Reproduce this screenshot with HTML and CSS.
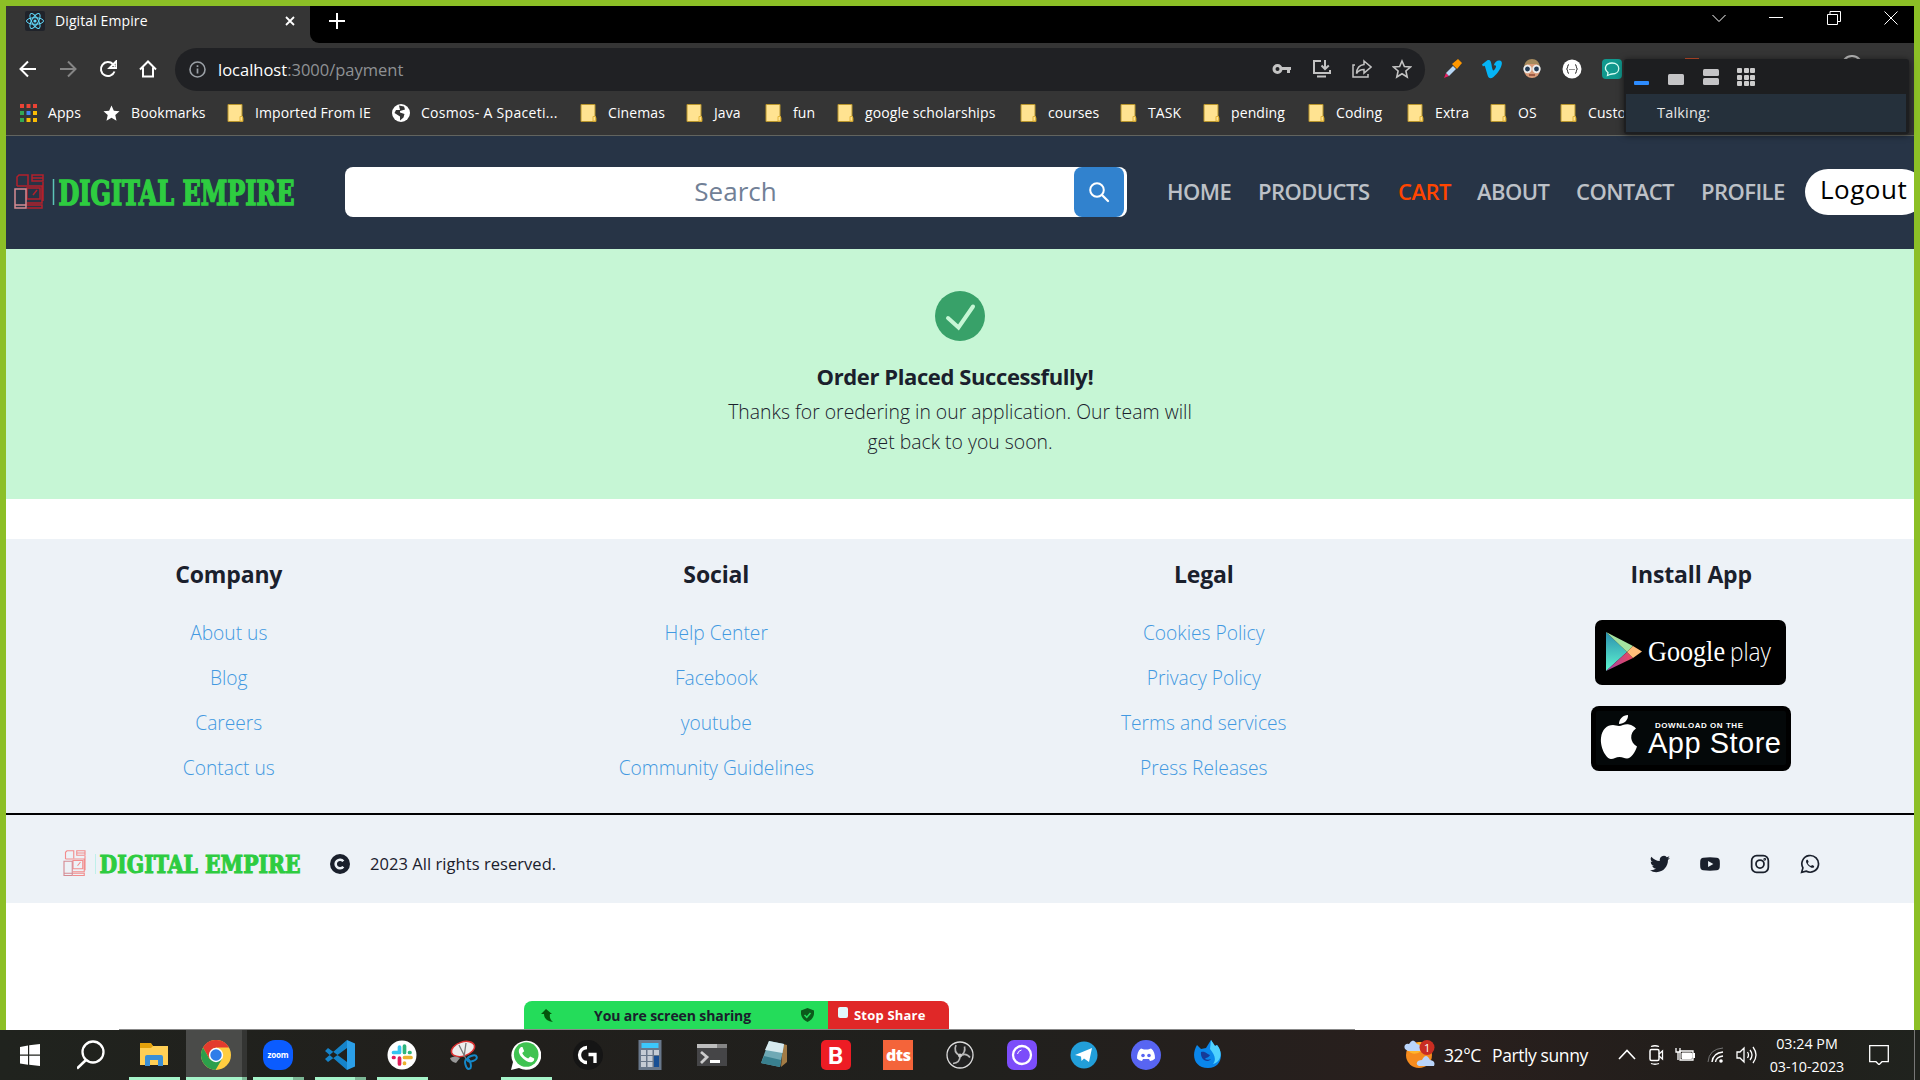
FILE: index.html
```html
<!DOCTYPE html>
<html lang="en">
<head>
<meta charset="utf-8">
<title>Digital Empire</title>
<link rel="stylesheet" href="styles.css">
</head>
<body>
<svg class="defs" width="0" height="0">
  <symbol id="folder" viewBox="0 0 16 18"><path d="M.5.5h14v13h1v4h-15z" fill="#ffe391" stroke="#b8952c"/><path d="M12.5 17v-4.5h2.5V17z" fill="#ffe391" stroke="#e3b53a"/></symbol>
  <symbol id="devices" viewBox="0 0 30 36"><g fill="none" stroke="currentColor" stroke-width="1.5"><path d="M3 12V3l2-2h9v10M18 1h11v6H18zM18 4h11M3 12h25v17H13M13 14h13v11H13zM12 31h16v3H13M29 8v19M19 21l4-5"/><path class="phone" d="M1 15h11v19H1zM1 31h11"/></g></symbol>
</svg>
<div class="screen">
  <div class="tabstrip">
    <div class="tab">
      <svg class="react" viewBox="0 0 20 20"><rect width="20" height="20" rx="2" fill="#20232a"/><g fill="none" stroke="#61dafb" stroke-width="1"><ellipse cx="10" cy="10" rx="8.5" ry="3.3"/><ellipse cx="10" cy="10" rx="8.5" ry="3.3" transform="rotate(60 10 10)"/><ellipse cx="10" cy="10" rx="8.5" ry="3.3" transform="rotate(120 10 10)"/></g><circle cx="10" cy="10" r="1.6" fill="#61dafb"/></svg>
      <span class="tab-title">Digital Empire</span>
      <svg class="tab-close" viewBox="0 0 10 10"><path d="M1 1l8 8M9 1L1 9" stroke="#fff" stroke-width="1.8"/></svg>
    </div>
    <svg class="tab-plus" viewBox="0 0 16 16"><path d="M8 0v16M0 8h16" stroke="#fff" stroke-width="2"/></svg>
    <div class="window-buttons">
      <svg width="14" height="14" viewBox="0 0 14 14"><path d="M.5 4l6.500 6.500L13.500 4"/></svg>
      <svg width="14" height="14" viewBox="0 0 14 14"><path d="M0 6.500h14"/></svg>
      <svg width="14" height="14" viewBox="0 0 14 14"><path d="M.5 3.500h10v10H.5zM3 3.500V.5h10.500v10h-3"/></svg>
      <svg width="14" height="14" viewBox="0 0 14 14"><path d="M.5.5l13 13M13.500.5l-13 13"/></svg>
    </div>
  </div>
  <div class="toolbar">
    <div class="nav-buttons">
      <svg width="18" height="18" viewBox="0 0 18 18"><path d="M17 9H2M9 1.500L1.500 9 9 16.500"/></svg>
      <svg class="dim" width="18" height="18" viewBox="0 0 18 18"><path d="M1 9h15M9 1.500L16.500 9 9 16.500"/></svg>
      <svg width="18" height="18" viewBox="0 0 18 18"><path d="M15.500 11.500A7 7 0 1 1 14 4.200l2 2.300"/><path d="M17.500 1v7h-7z" fill="#fff" stroke="none"/></svg>
      <svg width="18" height="18" viewBox="0 0 18 18"><path d="M1 9.500L9 1.500l8 8M4 7.500V16.500h10V7.500"/></svg>
    </div>
    <div class="omnibox">
      <svg width="17" height="17" viewBox="0 0 17 17"><circle cx="8.500" cy="8.500" r="7.500" fill="none" stroke="#9aa0a6" stroke-width="1.600"/><path d="M8.500 7.500v5M8.500 4.200v1.700" stroke="#9aa0a6" stroke-width="1.700"/></svg>
      <span class="url">localhost<span>:3000/payment</span></span>
      <div class="omni-actions">
        <svg width="20" height="20" viewBox="0 0 20 20"><circle cx="5.500" cy="10" r="3.500" stroke-width="3"/><path d="M9 9.500h10M16.500 9.500v4.500" stroke-width="3"/></svg>
        <svg width="20" height="20" viewBox="0 0 20 20"><path d="M9 2H2v12h16v-3M13 1v9M9.500 6.500L13 10l3.800-3.500M5 17.500h9" stroke-width="2"/></svg>
        <svg width="20" height="20" viewBox="0 0 20 20"><path d="M3 6H1v12h15v-3M12 2l7 6-7 6v-3.500c-4 0-6 1.500-7.500 4 .3-5 3-8.500 7.500-9z" stroke-width="1.500"/></svg>
        <svg width="20" height="20" viewBox="0 0 20 20"><path d="M10 2l2.400 5.500 6 .5-4.500 4 1.300 6L10 14.800 4.800 18l1.300-6-4.500-4 6-.5z" stroke-width="1.600"/></svg>
      </div>
    </div>
    <div class="extensions">
      <svg width="20" height="20" viewBox="0 0 20 20"><path d="M2 19l2-5 3 3z" fill="#e91e63"/><path d="M4 14l7-7 3 3-7 7z" fill="#b7d7f5"/><path d="M10 5l6-5 4 4-5 6z" fill="#ff9800"/></svg>
      <svg width="20" height="20" viewBox="0 0 20 20"><path d="M0 5.500L5 1.500c3-1.500 4 1 4.500 4 .6 4 1.200 6 2 6s3-3.500 2.500-4.500-1.500-.8-2.300-.4C13 2.200 15.500 1 18 1.500c5 1.500-1 12-6.500 16.500-3 2.200-5 1.300-6-2L3 7.500c-.5-1-1-.8-2 0z" fill="#05b4f5"/></svg>
      <svg width="20" height="20" viewBox="0 0 20 20"><circle cx="10" cy="11" r="8" fill="#d99b78"/><path d="M2 9c0-12 16-12 16 0l-3-4H5z" fill="#a58a5d"/><g fill="#243b55" stroke="#eee" stroke-width="1.800"><circle cx="5.500" cy="10" r="3.300"/><circle cx="14.500" cy="10" r="3.300"/></g><path d="M7 16h6" stroke="#8d4a37" stroke-width="1.500"/></svg>
      <svg width="20" height="20" viewBox="0 0 20 20"><circle cx="10" cy="10" r="9.500" fill="#fff"/><path d="M7 5.500c-1.700 0-1 3.500-2.300 4.500C6 11 5.300 14.500 7 14.500M13 5.500c1.700 0 1 3.500 2.300 4.500-1.300 1-.6 4.500-2.300 4.500" fill="none" stroke="#222"/><path d="M7.500 10.500h1M9.500 10.500h1M11.500 10.500h1" stroke="#222"/></svg>
      <svg width="20" height="20" viewBox="0 0 20 20"><rect width="20" height="20" rx="4" fill="#11998e"/><path d="M10 4c9 0 9 11 0 11-1.500 0-2 .5-4.500 1.500l.5-3C1 9.500 4 4 10 4z" fill="none" stroke="#d8fff5" stroke-width="1.300"/></svg>
      <i class="ext-peek"></i><i class="avatar-peek"></i>
    </div>
  </div>
  <div class="bookmarks">
    <div class="bm"><svg viewBox="0 0 17 18"><path d="M0 0h4v4H0zM6.500 0h4v4h-4zM13 0h4v4h-4z" fill="#ea4335"/><path d="M0 7h4v4H0zM0 14h4v4H0z" fill="#34a853"/><path d="M6.500 7h4v4h-4z" fill="#4285f4"/><path d="M13 7h4v4h-4zM6.500 14h4v4h-4zM13 14h4v4h-4z" fill="#fbbc05"/></svg>Apps</div>
    <div class="bm"><svg viewBox="0 0 18 18"><path d="M9 1l2.500 5.600 6 .6-4.500 4 1.300 6L9 14l-5.300 3.200 1.300-6-4.500-4 6-.6z" fill="#fff"/></svg>Bookmarks</div>
    <div class="bm"><svg><use href="#folder"/></svg>Imported From IE</div>
    <div class="bm"><svg viewBox="0 0 18 18"><circle cx="9" cy="9" r="9" fill="#fff"/><path d="M7 1.500l5 1 1 3-5 1.500v1.500l4.500 1.500-1 3.500-3.500 3v-4L2.500 9 4 6h4z" fill="#353535"/></svg>Cosmos- A Spaceti...</div>
    <div class="bm"><svg><use href="#folder"/></svg>Cinemas</div>
    <div class="bm"><svg><use href="#folder"/></svg>Java</div>
    <div class="bm"><svg><use href="#folder"/></svg>fun</div>
    <div class="bm"><svg><use href="#folder"/></svg>google scholarships</div>
    <div class="bm"><svg><use href="#folder"/></svg>courses</div>
    <div class="bm"><svg><use href="#folder"/></svg>TASK</div>
    <div class="bm"><svg><use href="#folder"/></svg>pending</div>
    <div class="bm"><svg><use href="#folder"/></svg>Coding</div>
    <div class="bm"><svg><use href="#folder"/></svg>Extra</div>
    <div class="bm"><svg><use href="#folder"/></svg>OS</div>
    <div class="bm"><svg><use href="#folder"/></svg>Custo</div>
  </div>

  <header class="site-header">
    <svg class="logo" width="290" height="50" viewBox="0 0 290 50">
      <g class="logo-mark"><use href="#devices" x="1" y="7" width="30" height="36"/></g>
      <path d="M40.500 12v26" stroke="#5cc4b8" stroke-width="1.500"/>
      <text x="45.500" y="37.500" textLength="236" lengthAdjust="spacingAndGlyphs">DIGITAL EMPIRE</text>
    </svg>
    <div class="search">
      <span>Search</span>
      <button aria-label="Search"><svg width="22" height="22" viewBox="0 0 22 22"><circle cx="9" cy="9" r="6.800" fill="none" stroke="#fff" stroke-width="2"/><path d="M14 14l6 6" stroke="#fff" stroke-width="2.300" stroke-linecap="round"/></svg></button>
    </div>
    <nav>
      <a class="n1">HOME</a><a class="n2">PRODUCTS</a><a class="n3">CART</a><a class="n4">ABOUT</a><a class="n5">CONTACT</a><a class="n6">PROFILE</a>
    </nav>
    <button class="logout">Logout</button>
  </header>

  <main class="alert">
    <svg width="50" height="50" viewBox="0 0 50 50"><circle cx="25" cy="25" r="25" fill="#38a169"/><path d="M13 27l10.500 9.500L38 15.500" fill="none" stroke="#c6f6d5" stroke-width="4" stroke-linecap="round"/></svg>
    <h1>Order Placed Successfully!</h1>
    <p>Thanks for oredering in our application. Our team will</p>
    <p>get back to you soon.</p>
  </main>

  <footer>
    <div class="columns">
      <section><h2>Company</h2><a>About us</a><a>Blog</a><a>Careers</a><a>Contact us</a></section>
      <section><h2>Social</h2><a>Help Center</a><a>Facebook</a><a>youtube</a><a>Community Guidelines</a></section>
      <section><h2>Legal</h2><a>Cookies Policy</a><a>Privacy Policy</a><a>Terms and services</a><a>Press Releases</a></section>
      <section><h2>Install App</h2>
        <svg class="badge play" width="191" height="65" viewBox="0 0 191 65">
          <defs><linearGradient id="teal" x2="0" y2="1"><stop offset="0" stop-color="#2a8fae"/><stop offset="1" stop-color="#5ff5d0"/></linearGradient><linearGradient id="pink"><stop offset="0" stop-color="#a044a8"/><stop offset="1" stop-color="#ec4a5d"/></linearGradient></defs>
          <rect width="191" height="65" rx="7" fill="#000"/>
          <path d="M11 12v39l21-19z" fill="url(#teal)"/><path d="M11 12l27 14-6 6z" fill="#a4e3a0"/><path d="M11 51l27-13-6-6z" fill="url(#pink)"/><path d="M38 26l9 5.500L38 38l-6-6z" fill="#ffbd79"/>
          <text class="gp-a" x="53" y="40.500" textLength="77" lengthAdjust="spacingAndGlyphs">Google</text>
          <text class="gp-b" x="135" y="40.500" textLength="41" lengthAdjust="spacingAndGlyphs">play</text>
        </svg>
        <svg class="badge" width="200" height="65" viewBox="0 0 200 65">
          <rect width="200" height="65" rx="8" fill="#000"/><rect x="5" y="5" width="190" height="54" rx="2" fill="#040809"/>
          <path d="M28 20c3 0 6-2.500 10-1.500 3 .5 5 2 7 4-7 5-6 14 1 18-2 6-6 12-10 12-3 0-4-1.500-7.500-1.500S23 53 20 53C14 52 9 40 10 32c1-9 6-13 12-13 2 0 4 1 6 1zM28 18c0-5 4-9 9-9 .5 5-4 9-9 9z" fill="#fff"/>
          <text class="as-a" x="64" y="21.500" textLength="88">DOWNLOAD ON THE</text>
          <text class="as-b" x="57" y="46.500" textLength="133">App Store</text>
        </svg>
      </section>
    </div>
    <div class="legal-bar">
      <svg class="logo small" width="244" height="36" viewBox="0 0 244 36">
        <g class="logo-mark"><use href="#devices" x="-1" y="4" width="27" height="27"/></g>
        <path d="M33.500 8v20" stroke="#bff0ea"/>
        <text x="37.500" y="26.500" textLength="201" lengthAdjust="spacingAndGlyphs">DIGITAL EMPIRE</text>
      </svg>
      <svg class="copy" width="20" height="20" viewBox="0 0 20 20"><circle cx="10" cy="10" r="10" fill="#1a202c"/><path d="M13.300 7.300a4.300 4.300 0 1 0 0 5.400" fill="none" stroke="#edf2f7" stroke-width="2.600"/></svg>
      <span class="rights">2023 All rights reserved.</span>
      <div class="socials">
        <svg viewBox="0 0 24 24" fill="#1a202c"><path d="M23.950 4.570a10 10 0 0 1-2.820.780 4.960 4.960 0 0 0 2.160-2.730 9.900 9.900 0 0 1-3.130 1.190 4.920 4.920 0 0 0-8.380 4.480A13.930 13.930 0 0 1 1.640 3.160a4.920 4.920 0 0 0 1.520 6.570 4.900 4.900 0 0 1-2.230-.610v.060a4.920 4.920 0 0 0 3.950 4.830 5 5 0 0 1-2.210.080 4.940 4.940 0 0 0 4.600 3.420A9.870 9.870 0 0 1 0 19.540a14 14 0 0 0 7.550 2.210c9.050 0 14-7.500 14-13.980 0-.210 0-.420-.020-.630a9.940 9.940 0 0 0 2.420-2.570z"/></svg>
        <svg viewBox="0 0 24 24"><path fill-rule="evenodd" d="M4 4.500Q12 3.500 20 4.500q3.500.5 3.700 4Q24 12 23.700 15.500q-.2 3.500-3.700 4-8 1-16 0-3.500-.5-3.700-4Q0 12 .3 8.500.5 5 4 4.500zM9.700 8.400v7.200L16 12z" fill="#1a202c"/></svg>
        <svg viewBox="0 0 24 24" fill="none" stroke="#1a202c" stroke-width="2.100"><rect x="2" y="2" width="20" height="20" rx="6"/><circle cx="12" cy="12" r="4.800"/><circle cx="17.700" cy="6.300" r=".6"/></svg>
        <svg viewBox="0 0 24 24" fill="none" stroke="#1a202c" stroke-width="2"><path d="M2 22l1.500-5.300A10 10 0 1 1 7.300 20.500z"/><path d="M8 7c-1.500 1.500-.8 4 1.500 6.500s5.500 4 7.300 2.500l.2-1.500-2.500-1.300-1.300 1.300C11 13.500 10 12.500 9.300 10.800L10.400 9.500 9.300 7z" fill="#1a202c" stroke="none"/></svg>
      </div>
    </div>
  </footer>
  <div class="page-end"></div>
</div>

<div class="taskbar">
  <div class="apps">
    <div class="app"><svg viewBox="0 0 30 30"><path d="M5 7l8-1.500v9H5zM14.200 5.200L25 4v10.500H14.200zM5 15.700h8v9L5 23.500zM14.200 15.700H25V26l-10.800-1.200z" fill="#fff"/></svg></div>
    <div class="app"><svg viewBox="0 0 30 30"><circle cx="16" cy="12" r="10.500" fill="none" stroke="#fff" stroke-width="2.300"/><path d="M9 20l-9 8.500" stroke="#fff" stroke-width="2.600"/></svg></div>
    <div class="app run"><svg viewBox="0 0 30 30"><path d="M1 4h11l2 2h15v19H1z" fill="#ffcf55"/><path d="M1 3h11l2 3-2 2H1z" fill="#e3a10b"/><path d="M6 26V17q0-2 2-2h14q2 0 2 2v9h-5v-6h-8v6z" fill="#3a8fd6"/></svg></div>
    <div class="app run active multi"><svg viewBox="0 0 30 30"><circle cx="15" cy="15" r="15" fill="#ffcd40"/><path d="M2 7.500A15 15 0 0 1 28 7.500H15L8.500 19z" fill="#e33b2e"/><path d="M2 7.500L8.500 19 21 19l-6.500 11A15 15 0 0 1 2 7.500z" fill="#2c9f4b"/><circle cx="15" cy="15" r="7.200" fill="#fff"/><circle cx="15" cy="15" r="5.700" fill="#2f7de9"/></svg></div>
    <div class="app run multi"><svg viewBox="0 0 30 30"><rect width="30" height="30" rx="12" fill="#0b5cff"/><text x="4.500" y="17.500" class="zoom" textLength="21">zoom</text></svg></div>
    <div class="app run multi"><svg viewBox="0 0 30 30"><path d="M22 0l8 3.500v23L22 30z" fill="#2b9fe8"/><path d="M22 0v8L3 22l-3-3z M22 22L3 8 0 11l22 19z" fill="#1583c9"/></svg></div>
    <div class="app run"><svg viewBox="0 0 30 30"><circle cx="15" cy="15" r="14.500" fill="#fff"/><g stroke-width="3.700" stroke-linecap="round"><path d="M12.500 7v5.500M6.500 12.500h6" stroke="#36c5f0"/><path d="M17.500 6v6.500M22.500 12.500h.5" stroke="#2eb67d"/><path d="M17.500 17.500H24M17.500 23v.5" stroke="#ecb22e"/><path d="M12.500 18v6M6.500 17.500H7" stroke="#e01e5a"/></g></svg></div>
    <div class="app"><svg viewBox="0 0 30 30"><ellipse cx="14" cy="9" rx="12" ry="7" transform="rotate(-18 14 9)" fill="#ededed" stroke="#d92f2f" stroke-width="1.500"/><path d="M1 18q5-3 10 0l-4 5q-5-1-6-5z" fill="#999"/><path d="M10 5l7 14M17 3l-2 14" stroke="#777" stroke-width="1.300"/><ellipse cx="23" cy="18.500" rx="5" ry="2.600" transform="rotate(-20 23 18.500)" fill="none" stroke="#1588c9" stroke-width="2"/><ellipse cx="19" cy="24" rx="2.600" ry="5" transform="rotate(-15 19 24)" fill="none" stroke="#1588c9" stroke-width="2"/></svg></div>
    <div class="app run"><svg viewBox="0 0 30 30"><path d="M0 30l2-8A15 14.500 0 1 1 8 28z" fill="#fff"/><circle cx="15.200" cy="14.500" r="12.300" fill="#3fc351"/><path d="M10 7c-4 3-2 8 2 11.500s8 5.500 11 2l.2-2-4-2-2 2c-3-1-5-3-6-5.500l2-1.800L11.500 7z" fill="#fff"/></svg></div>
    <div class="app"><svg viewBox="0 0 30 30"><circle cx="15" cy="15" r="15" fill="#151515"/><path d="M14 7.500a7.500 7.500 0 0 0 0 15M15.500 14.500H22V23" fill="none" stroke="#fff" stroke-width="3.300"/></svg></div>
    <div class="app"><svg viewBox="0 0 30 30"><rect x="3.500" width="23" height="30" fill="#68778a"/><rect x="6.500" y="3" width="17" height="5" fill="#3cc7fa"/><g fill="#c5ccd5"><path d="M6 10h5v5H6zM12.500 10h5v5h-5zM19 10h5v5h-5zM6 16h5v5H6zM12.500 16h5v5h-5zM6 22h5v5H6zM12.500 22h5v5h-5z"/></g><path d="M19 16h5v11h-5z" fill="#174f95"/></svg></div>
    <div class="app"><svg viewBox="0 0 30 30"><rect y="4" width="30" height="22" fill="#454547"/><path d="M0 4h20v4H0z" fill="#bdbdbd"/><path d="M20 4h10v4H20z" fill="#858585"/><path d="M4 12l6 5-6 6" fill="none" stroke="#ccc" stroke-width="2.800"/><path d="M13 21.500h10" stroke="#fff" stroke-width="3"/></svg></div>
    <div class="app"><svg viewBox="0 0 30 30"><path d="M24 4l4 1v17l-6 5z" fill="#a27b45"/><path d="M10 1l15 3-4 23L2 23z" fill="#6fa9b5"/><path d="M10 1l15 3-1.500 9L6 10z" fill="#d7eaef"/><path d="M5 16L2 23l19 4 1-7z" fill="#39808f"/></svg></div>
    <div class="app"><svg viewBox="0 0 30 30"><rect width="30" height="30" rx="5" fill="#ed1c24"/><text x="7" y="23.500" class="bit">B</text></svg></div>
    <div class="app"><svg viewBox="0 0 30 30"><path d="M0 0h30v30H0z" fill="#f4643a"/><text x="3" y="20.500" class="dts" textLength="25">dts</text></svg></div>
    <div class="app"><svg viewBox="0 0 30 30"><circle cx="15" cy="15" r="13" fill="#222" stroke="#ddd" stroke-width="1.300"/><path d="M11 5q-3 7 4 11 6-4 10 1.500M15 16q0 7-7 7.500M15 16q6-3 4.500-9.500" fill="none" stroke="#b8b8b8" stroke-width="1.700"/><circle cx="15" cy="15.500" r="2" fill="#ccc"/></svg></div>
    <div class="app"><svg viewBox="0 0 30 30"><rect width="30" height="30" rx="7" fill="#7c4dfa"/><circle cx="15" cy="15" r="9" fill="none" stroke="#fff" stroke-width="2.300"/><path d="M10.500 14a5 5 0 0 1 4-4" fill="none" stroke="#fff"/></svg></div>
    <div class="app"><svg viewBox="0 0 30 30"><circle cx="15" cy="15" r="13.500" fill="#229ed9"/><path d="M6 15L23 8l-3 14-5-3.500-2.500 2.500-.5-4.500z" fill="#fff"/></svg></div>
    <div class="app"><svg viewBox="0 0 30 30"><circle cx="15" cy="15" r="15" fill="#5865f2"/><path d="M10 8.500l3 1h4l3-1c3 2 4 6 4 10q-2 2-5 2.500l-1-2h-6l-1 2q-3-.5-5-2.500c0-4 1-8 4-10z" fill="#fff"/><circle cx="12" cy="15.500" r="1.800" fill="#5865f2"/><circle cx="18" cy="15.500" r="1.800" fill="#5865f2"/></svg></div>
    <div class="app"><svg viewBox="0 0 30 30"><path d="M4 5l4 4 5-1 5-8 4 6 2-1c7 8 5 23-9 23S-2 15 4 5z" fill="#0a86ea"/><path d="M18 0l4 6 2-1c7 8 3 18-4 19 4-5 1-10-3-15z" fill="#4fd2ff"/><path d="M8 12c5-1 5 2 9 3-1 2.500-4 2.500-5 4 2 1 4 1 6 0-4 5-11 0-10-7z" fill="#163a97"/></svg></div>
  </div>
  <div class="tray">
    <svg class="weather" width="31" height="30" viewBox="0 0 31 30"><circle cx="15" cy="15" r="13" fill="#f58b1e"/><path d="M3 10q10 10 22-7L15 2 4 9z" fill="#ffb52c"/><path d="M4 11Q-1 9 1 5q2-2 4-1 4-7 8 0 5 1 3 7z" fill="#b9d4fa"/><path d="M15 26q-4-2-1-5 2-1 4-1 4-8 8 0 6 1 4 6z" fill="#b9d4fa"/><circle cx="23" cy="7.500" r="7.500" fill="#c92d22"/><text x="20" y="11.500">1</text></svg>
    <span class="temp">32°C</span><span class="cond">Partly sunny</span>
    <div class="tray-icons">
      <svg width="18" height="20" viewBox="0 0 18 20"><path d="M1 14l8-8.500 8 8.500" stroke-width="1.600"/></svg>
      <svg width="16" height="20" viewBox="0 0 16 20"><rect x="2" y="4.500" width="9" height="11" rx="1.500" stroke-width="1.500"/><path d="M11 9l3.500-3v8L11 11M3 1.500q4-1.500 8 0M3 18.500q4 1.500 8 0" stroke-width="1.300"/></svg>
      <svg width="20" height="20" viewBox="0 0 20 20"><path d="M1 3v4h4V3M3 7v8" stroke-width="1.300"/><path d="M5 6h13v9H5z" stroke-width="1.300"/><path d="M7 8h9.500v5.500H7zM18 8.500h2v4h-2z" fill="#fff"/></svg>
      <svg width="18" height="20" viewBox="0 0 18 20"><path d="M1 17Q2 4 16 3" stroke="#777"/><path d="M5 17Q6 8 16 7M8.500 17Q9 12 16 11" stroke-width="1.400"/><circle cx="14" cy="16" r="1.800" fill="#fff" stroke="none"/></svg>
      <svg width="21" height="20" viewBox="0 0 21 20"><path d="M1 7h3l4-4v14l-4-4H1zM11.500 7q2 3 0 6M14 5q4 5 0 10M17 2q6 8 0 16" stroke-width="1.300"/></svg>
    </div>
    <div class="clock"><span>03:24 PM</span><span>03-10-2023</span></div>
    <svg class="notif" width="20" height="20" viewBox="0 0 20 20"><path d="M.7.7h18.600v16H13l-3 3-3-3H.7z" fill="none" stroke="#fff" stroke-width="1.300"/></svg>
    <i class="show-desktop"></i>
  </div>
</div>

<div class="talking-panel">
  <div class="panel-tools">
    <svg width="86" height="20" viewBox="0 0 86 20"><rect y="13" width="15" height="4" rx="1" fill="#2d8cff"/><g fill="#c4c4c6"><rect x="34" y="6" width="16" height="11" rx="1.500"/><rect x="69" y="1" width="16" height="7" rx="1.500"/><rect x="69" y="10" width="16" height="7" rx="1.500"/></g></svg>
    <div class="grid-icon"><i></i><i></i><i></i><i></i><i></i><i></i><i></i><i></i><i></i></div>
  </div>
  <div class="panel-body">Talking:</div>
</div>
<div class="share-bar">
  <div class="sharing">
    <svg width="13" height="13" viewBox="0 0 13 13"><path d="M5 0L0 5h3q0 7 9 8-4-3-3-8h2z" fill="#04540c"/></svg>
    <span>You are screen sharing</span>
    <svg width="13" height="14" viewBox="0 0 13 14"><path d="M6.500 0L13 2.500q1 8-6.500 11.500Q-1 10.500 0 2.500z" fill="#0b5a1b"/><path d="M3.500 7l2.300 2.300L9.500 5" fill="none" stroke="#24dc5a" stroke-width="1.500"/></svg>
  </div>
  <div class="stop"><i></i><span>Stop Share</span></div>
</div>
</body>
</html>
```
FILE: styles.css
```css
* { box-sizing: border-box; }
body {
  margin: 0;
  width: 1920px;
  height: 1080px;
  overflow: hidden;
  position: relative;
  background: #fff;
  color: #1a202c;
  font-family: "Open Sans", "Noto Sans", sans-serif;
}
svg { flex: none; display: block; }
.defs { position: absolute; }
h1, h2, p { margin: 0; }
button { border: 0; padding: 0; font: inherit; }
.screen {
  display: flex;
  flex-direction: column;
  height: 1030px;
  border: 6px solid #8cbf26;
  border-bottom: 0;
  overflow: hidden;
}

/* browser chrome */
.tabstrip { display: flex; height: 37px; background: linear-gradient(90deg, #353535 320px, #000 320px); flex: none; }
.tab {
  display: flex;
  align-items: center;
  width: 304px;
  padding: 0 15px 8px 19px;
  background: #353535;
}
.react { width: 20px; height: 20px; }
.tab-title { margin-left: 10px; font-size: 14px; letter-spacing: 0.1px; color: #fff; }
.tab-close { width: 10px; height: 10px; margin-left: auto; }
.tab-plus { flex: none; box-sizing: content-box; width: 16px; height: 16px; padding: 7px 0 14px 19px; background: #000; border-bottom-left-radius: 9px; }
.window-buttons { display: flex; flex: 1; justify-content: flex-end; gap: 43.5px; padding: 5px 16px 0 0; background: #000; }
.window-buttons path { fill: none; stroke: #fff; stroke-width: 1; }
.toolbar { display: flex; align-items: center; height: 52px; padding: 0 0 0 2px; background: #353535; flex: none; }
.nav-buttons { display: flex; gap: 22px; width: 167px; padding-left: 10.5px; }
.nav-buttons path { fill: none; stroke: #fff; stroke-width: 2; }
.nav-buttons .dim path { stroke: #858585; }
.omnibox {
  display: flex;
  align-items: center;
  width: 1250px;
  height: 43px;
  padding: 0 13px 0 14px;
  border-radius: 22px;
  background: #202124;
}
.url { margin-left: 12px; font-size: 16.5px; color: #fff; }
.url span { color: #8f9194; }
.omni-actions { display: flex; gap: 20px; margin-left: auto; }
.omni-actions * { fill: none; stroke: #c3c3c3; }
.extensions { display: flex; gap: 20px; padding-left: 17px; position: relative; }
.ext-peek { position: absolute; left: 260px; top: -1px; width: 14px; height: 8px; background: #c9502c; }
.avatar-peek { position: absolute; left: 416px; top: -4px; width: 22px; height: 22px; border: 2px solid #bbb; border-radius: 50%; }
.bookmarks {
  display: grid;
  grid-template-columns: 83px 124px 165px 188px 106px 79px 72px 183px 100px 83px 105px 99px 83px 70px 90px;
  align-items: center;
  height: 41px;
  padding: 0 0 5px 14px;
  background: #353535;
  border-bottom: 1px solid #62645f;
  overflow: hidden;
  flex: none;
}
.bm { display: flex; align-items: center; font-size: 14px; letter-spacing: 0.1px; color: #fff; white-space: nowrap; }
.bm svg { width: 17px; height: 18px; margin-right: 11px; }
.bm:nth-child(4) { letter-spacing: 0.3px; }
.bm:nth-child(4) svg { width: 18px; }

/* site header */
.site-header { display: flex; align-items: center; height: 113px; padding: 0 0 1px 7px; background: #273446; flex: none; }
.logo { overflow: visible; }
.logo text { font-family: "DejaVu Serif", serif; font-weight: 700; font-size: 34px; fill: #2ecc40; stroke: #2ecc40; stroke-width: 1.7; }
.logo-mark { color: #b3202c; }
.phone { stroke: #d58a92; }
.logo.small text { font-size: 24px; stroke-width: 1.1; }
.small .logo-mark, .small .phone { color: #f28d8d; }
.search {
  display: flex;
  flex: none;
  width: 782px;
  height: 50px;
  margin-left: 42px;
  padding-right: 3px;
  border-radius: 8px;
  background: #fff;
}
.search span { flex: 1; align-self: center; text-align: center; padding: 0 0 2px 52px; font-size: 26px; font-weight: 370; color: #718096; }
.search button { display: flex; align-items: center; justify-content: center; width: 50px; border-radius: 8px; background: #3182ce; }
nav { display: flex; flex: none; margin-left: 40px; padding-bottom: 2px; font-size: 22px; font-weight: 650; letter-spacing: -0.55px; color: #bdc1c7; }
.n1 { width: 91px; }
.n2 { width: 140px; }
.n3 { width: 79px; color: #ff4500; }
.n4 { width: 99px; }
.n5 { width: 125px; }
.n6 { width: 104px; }
.logout { flex: none; width: 120px; height: 46px; padding: 0 0 6px 15px; border-radius: 23px; background: #fff; color: #000; font-size: 26px; line-height: 40px; letter-spacing: 0.5px; font-weight: 370; text-align: left; }

.alert { display: flex; flex-direction: column; align-items: center; height: 250px; padding-top: 42px; background: #c6f6d5; flex: none; }
h1 { margin: 20px 10px 6px 0; font-size: 22px; line-height: 30px; font-weight: 700; letter-spacing: -0.4px; }
.alert p { font-size: 19.4px; line-height: 30px; font-weight: 360; }

/* footer */
footer { margin-top: 40px; background: #edf2f7; flex: none; height: 364px; }
.columns { display: grid; grid-template-columns: repeat(4, 1fr); gap: 42px; height: 276px; padding-top: 18px; border-bottom: 2px solid #000; }
section { display: flex; flex-direction: column; align-items: center; }
h2 { height: 54px; font-size: 23px; line-height: 34px; font-weight: 680; letter-spacing: -0.15px; }
section a { font-size: 19.2px; line-height: 30px; margin: 7px 0 8px; font-weight: 360; color: #4299e1; }
.badge { margin-bottom: 21px; }
.play { margin: 9px 1px 21px 0; }
.gp-a { font: 30px "Liberation Serif", serif; fill: #fff; }
.gp-b { font: 300 26px "Open Sans", sans-serif; fill: #fff; }
.as-a { font: 700 8px "Liberation Sans", sans-serif; fill: #fff; }
.as-b { font: 29px "Liberation Sans", sans-serif; fill: #fff; }
.legal-bar { display: flex; align-items: center; height: 88px; padding: 10px 94px 0 56px; }
.copy { margin-left: 24px; }
.rights { margin-left: 20px; padding-bottom: 1px; font-size: 16.5px; letter-spacing: 0.05px; }
.socials { display: flex; gap: 30px; margin-left: auto; }
.socials svg { width: 20px; height: 20px; }
.page-end { flex: 1; margin: 0 559px 0 113px; border-bottom: 1px solid #888; }

/* taskbar */
.taskbar { display: flex; height: 50px; background: linear-gradient(90deg, #20231e 0, #211f1c 25%, #20201d 50%, #291f1d 75%, #211e1b 90%, #20231e); color: #fff; }
.apps { display: flex; margin-left: -1px; }
.app { display: flex; position: relative; width: 62px; height: 50px; align-items: center; justify-content: center; }
.app svg { width: 30px; height: 30px; }
.app.run::after { content: ""; position: absolute; left: 6px; bottom: 0; width: 51px; height: 3px; background: #a5f3c9; }
.app.active::before { content: ""; position: absolute; left: 1px; top: 0; width: 61px; height: 50px; background: linear-gradient(90deg, #4a4b49 56px, #343533 56px); }
.app.active svg { position: relative; }
.app.active::after { left: 1px; width: 61px; }
.app.multi::after { background: linear-gradient(90deg, #a5f3c9 40px, #7bb795 40px); }
.app.active.multi::after { background: linear-gradient(90deg, #a5f3c9 56px, #7bb795 56px); }
.zoom { font: 700 8px "Open Sans", sans-serif; fill: #fff; }
.bit { font: 700 24px "Roboto", sans-serif; fill: #fff; }
.dts { font: 800 16px "Open Sans", sans-serif; fill: #fff; }
.tray { display: flex; flex: 1; align-items: center; margin-left: 165px; }
.weather text { font: 11px "Open Sans", sans-serif; fill: #fff; }
.temp, .cond { font-size: 17.5px; letter-spacing: -0.4px; white-space: nowrap; flex: none; }
.temp { width: 48px; margin-left: 9px; }
.cond { width: 126px; }
.tray-icons { display: flex; gap: 11.5px; flex: none; }
.tray-icons svg { fill: none; stroke: #fff; }
.clock { display: flex; flex-direction: column; align-items: center; width: 78px; margin-left: 11px; padding-bottom: 1px; font-size: 14.3px; line-height: 23px; white-space: nowrap; flex: none; }
.notif { margin-left: 23px; }
.show-desktop { margin-left: auto; width: 6px; height: 50px; border-left: 1px solid #777; }

/* floating meeting widgets */
.talking-panel {
  position: absolute;
  left: 1624px;
  top: 59px;
  width: 285px;
  height: 75px;
  padding: 0 3px 2px 2px;
  border-radius: 3px;
  background: #1d1e20;
  box-shadow: 0 1px 7px rgba(0, 0, 0, .6);
}
.panel-tools { display: flex; height: 35px; padding: 9px 0 0 8px; }
.grid-icon { display: grid; grid-template-columns: repeat(3, 5px); grid-auto-rows: 5px; gap: 1.5px; margin-left: 17px; }
.grid-icon i { background: #ccc; border-radius: 1px; }
.panel-body { height: 38px; padding-left: 31px; line-height: 37px; font-size: 14.5px; letter-spacing: 0.2px; color: #e6e6e6; background: #25303b; }
.share-bar { position: absolute; left: 524px; top: 1001px; display: flex; width: 425px; height: 28px; border-radius: 8px 8px 0 0; overflow: hidden; font-weight: 700; }
.sharing { display: flex; align-items: center; width: 304px; padding: 0 14px 0 17px; background: #24dc5a; font-size: 14px; letter-spacing: -0.1px; }
.sharing span { flex: 1; padding-left: 40px; }
.stop { display: flex; align-items: center; flex: 1; padding-left: 10px; background: #e02828; color: #fff; font-size: 13px; letter-spacing: 0.2px; }
.stop i { width: 10px; height: 11px; margin: 0 6px 6px 0; border-radius: 2px; background: #e2faff; }
```
